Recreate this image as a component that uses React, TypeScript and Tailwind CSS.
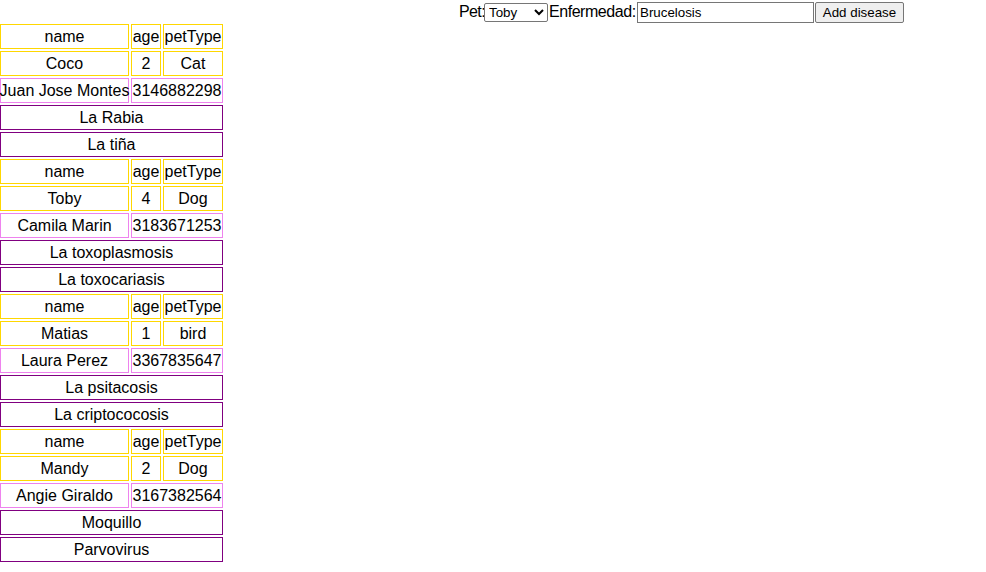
import { useState } from "react"

const PETS = [
  {
    name: "Coco",
    age: 2,
    petType: "Cat",
    owner: "Juan Jose Montes",
    phone: "3146882298",
    diseases: ["La Rabia", "La tiña"],
  },
  {
    name: "Toby",
    age: 4,
    petType: "Dog",
    owner: "Camila Marin",
    phone: "3183671253",
    diseases: ["La toxoplasmosis", "La toxocariasis"],
  },
  {
    name: "Matias",
    age: 1,
    petType: "bird",
    owner: "Laura Perez",
    phone: "3367835647",
    diseases: ["La psitacosis", "La criptococosis"],
  },
  {
    name: "Mandy",
    age: 2,
    petType: "Dog",
    owner: "Angie Giraldo",
    phone: "3167382564",
    diseases: ["Moquillo", "Parvovirus"],
  },
]

const cell =
  "flex h-[25px] items-center justify-center whitespace-nowrap border leading-none"

function PetBlock({ pet }: { pet: (typeof PETS)[number] }) {
  return (
    <>
      <div className="flex gap-[2px]">
        <div className={`${cell} w-[129px] border-[#ffd700]`}>name</div>
        <div className={`${cell} w-[30px] border-[#ffd700]`}>age</div>
        <div className={`${cell} w-[60px] border-[#ffd700]`}>petType</div>
      </div>
      <div className="flex gap-[2px]">
        <div className={`${cell} w-[129px] border-[#ffd700]`}>{pet.name}</div>
        <div className={`${cell} w-[30px] border-[#ffd700]`}>{pet.age}</div>
        <div className={`${cell} w-[60px] border-[#ffd700]`}>{pet.petType}</div>
      </div>
      <div className="flex gap-[2px]">
        <div className={`${cell} w-[129px] border-[#ee82ee]`}>{pet.owner}</div>
        <div className={`${cell} w-[92px] border-[#ee82ee]`}>{pet.phone}</div>
      </div>
      {pet.diseases.map((d) => (
        <div key={d} className={`${cell} w-[223px] border-[#800080]`}>
          {d}
        </div>
      ))}
    </>
  )
}

export default function App() {
  const [pet, setPet] = useState("Toby")
  const [disease, setDisease] = useState("Brucelosis")

  return (
    <div className="min-h-[572px] bg-white text-[16px] text-black [font-family:'Segoe_UI','Liberation_Sans',sans-serif]">
      <div className="flex h-[24px] items-center pl-[459px]">
        <span className="w-[25px] whitespace-nowrap tracking-[-0.6px]">Pet:</span>
        <select
          value={pet}
          onChange={(e) => setPet(e.target.value)}
          className="h-[19px] w-[64px] rounded-[2px] border border-[#767676] bg-white text-[13.33px] [font-family:'Liberation_Sans',Arial,sans-serif]"
        >
          {PETS.map((p) => (
            <option key={p.name}>{p.name}</option>
          ))}
        </select>
        <span className="w-[89px] whitespace-nowrap pl-[1px] tracking-[-0.45px]">Enfermedad:</span>
        <input
          value={disease}
          onChange={(e) => setDisease(e.target.value)}
          className="h-[21px] w-[177px] border border-[#767676] bg-white px-[2px] text-[13.33px] [font-family:'Liberation_Sans',Arial,sans-serif]"
        />
        <button
          type="button"
          className="ml-[1px] h-[21px] w-[89px] rounded-[2px] border border-[#767676] bg-[#efefef] text-[13.33px] [font-family:'Liberation_Sans',Arial,sans-serif]"
        >
          Add disease
        </button>
      </div>
      <div className="flex flex-col gap-[2px]">
        {PETS.map((p) => (
          <PetBlock key={p.name} pet={p} />
        ))}
      </div>
    </div>
  )
}
